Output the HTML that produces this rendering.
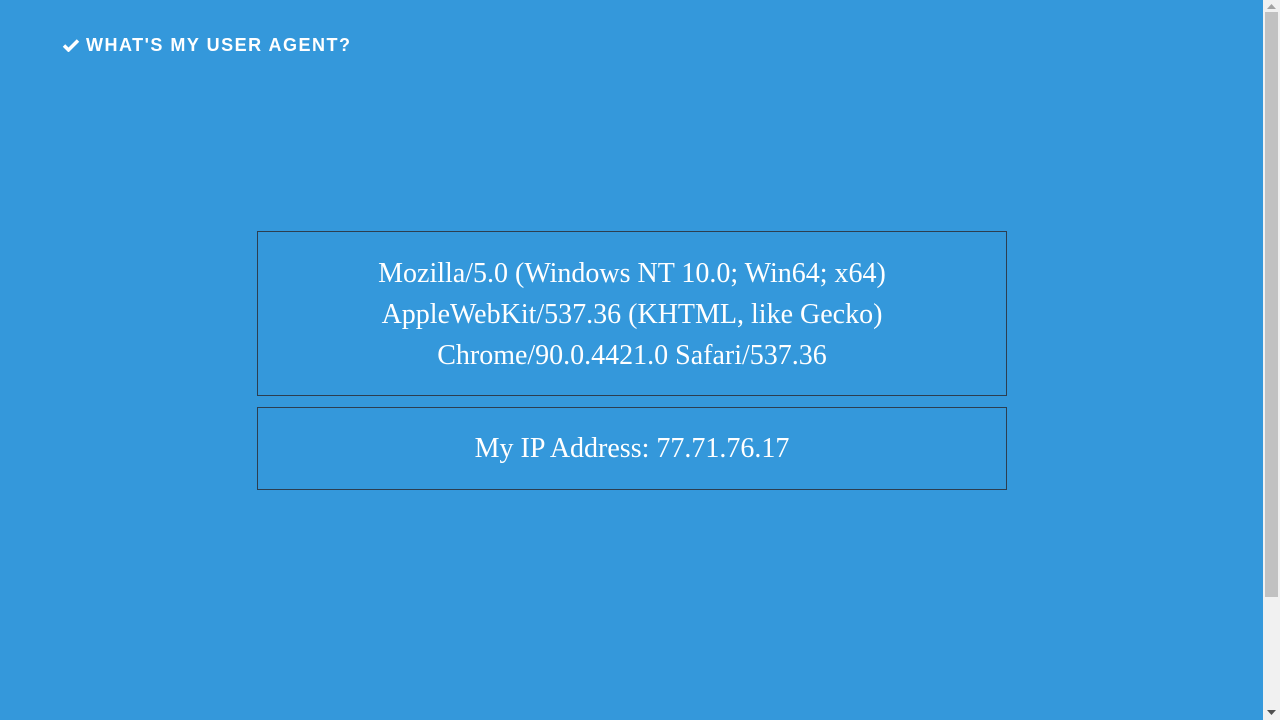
<!DOCTYPE html>
<html><head><style>
html,body{margin:0;padding:0;}
body{width:1280px;height:720px;background:#3498db;position:relative;overflow:hidden;font-family:"Liberation Serif",serif;color:#fff;}
.hdr{position:absolute;left:62px;top:34px;font-family:"Liberation Sans",sans-serif;font-weight:bold;font-size:18px;letter-spacing:1.5px;line-height:22px;white-space:nowrap;}
.hdr svg{vertical-align:-1px;margin-right:6px}
.box{position:absolute;left:257px;width:748px;border:1px solid #2c3e50;text-align:center;font-size:28px;}
.b1{top:231px;height:163px;}
.b1 div{position:absolute;left:0;right:0;top:21px;line-height:41px;}
.b2{top:407px;height:81px;line-height:81px;}
.sb{position:absolute;right:0;top:0;width:17px;height:720px;background:#f1f1f1;}
.th{position:absolute;left:2px;top:12px;width:13px;height:585px;background:#c1c1c1;}
</style></head><body>
<div class="hdr"><svg width="18" height="14" viewBox="0 0 18 14"><path d="M2 7.5l4.5 4.5L16 2.5" stroke="#fff" stroke-width="3.5" fill="none"/></svg>WHAT'S MY USER AGENT?</div>
<div class="box b1"><div>Mozilla/5.0 (Windows NT 10.0; Win64; x64)<br>AppleWebKit/537.36 (KHTML, like Gecko)<br>Chrome/90.0.4421.0 Safari/537.36</div></div>
<div class="box b2">My IP Address: 77.71.76.17</div>
<div class="sb"><div class="th"></div>
<svg style="position:absolute;left:4px;top:4px" width="9" height="5"><path d="M0 5L4.5 0L9 5z" fill="#a3a3a3"/></svg>
<svg style="position:absolute;left:4px;top:710px" width="9" height="5"><path d="M0 0L4.5 5L9 0z" fill="#505050"/></svg></div>
</body></html>
